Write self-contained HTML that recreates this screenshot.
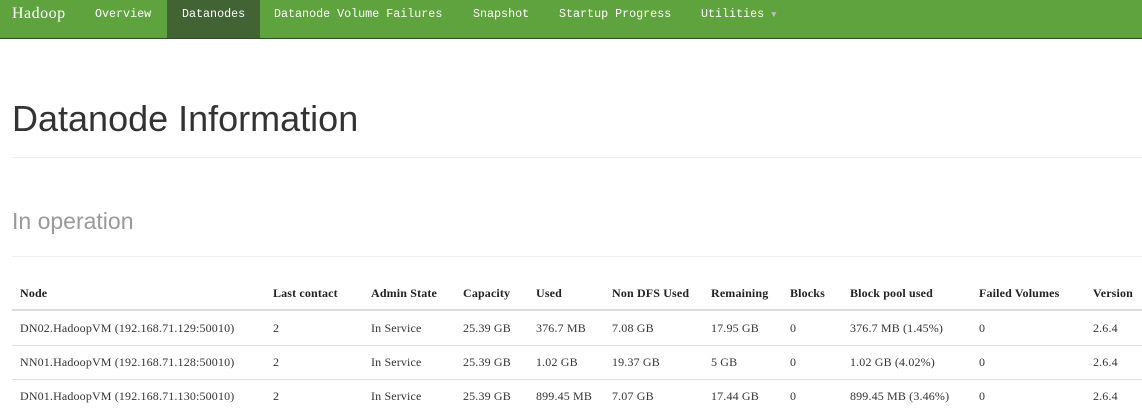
<!DOCTYPE html>
<html><head><meta charset="utf-8"><style>
body{margin:0;width:1142px;height:411px;overflow:hidden;background:#fff;font-family:"Liberation Serif","Noto Serif CJK SC",serif;color:#333}
.nav{position:absolute;left:0;top:0;width:1142px;height:38px;background:#5fa33e;border-bottom:1px solid #2d4e1e}
.nav span{position:absolute;top:0;height:38px;line-height:28px;color:#fff;font-size:11.7px;font-family:"Liberation Mono",monospace}
.nav .act{background:#426434}
h1{position:absolute;left:12px;top:98px;margin:0;font:36px "Liberation Sans",sans-serif;color:#333}
.hr1{position:absolute;left:12px;right:0;top:157px;border-top:1px solid #eee}
h2{position:absolute;left:12px;top:208px;margin:0;font:23px "Liberation Sans",sans-serif;color:#999}
.hr2{position:absolute;left:12px;right:0;top:256px;border-top:1px solid #eee}
.c{position:absolute;font-size:12px;white-space:nowrap;letter-spacing:0.15px}
.h{font-weight:bold;color:#222}
.l{position:absolute;left:12px;right:0}
</style></head><body>
<div class="nav">
<span style="left:12px;font-size:16px;font-family:'Liberation Serif',serif;letter-spacing:0.5px">Hadoop</span>
<span style="left:95px">Overview</span>
<span class="act" style="left:167px;width:93px"><span style="left:15px;position:absolute">Datanodes</span></span>
<span style="left:274px">Datanode Volume Failures</span>
<span style="left:473px">Snapshot</span>
<span style="left:559px">Startup Progress</span>
<span style="left:701px">Utilities <span style="position:relative;color:#bbb;font-size:9px">▼</span></span>
</div>
<h1>Datanode Information</h1>
<div class="hr1"></div>
<h2>In operation</h2>
<div class="hr2"></div>
<div class="l" style="top:309px;border-top:2px solid #ddd"></div>
<div class="l" style="top:345px;border-top:1px solid #ddd"></div>
<div class="l" style="top:379px;border-top:1px solid #ddd"></div>
<div id="t"></div>
<script>
var xs=[20,273,371,463,536,612,711,790,850,979,1093];
var rows=[[286,1,["Node","Last contact","Admin State","Capacity","Used","Non DFS Used","Remaining","Blocks","Block pool used","Failed Volumes","Version"]],
[321,0,["DN02.HadoopVM (192.168.71.129:50010)","2","In Service","25.39 GB","376.7 MB","7.08 GB","17.95 GB","0","376.7 MB (1.45%)","0","2.6.4"]],
[355,0,["NN01.HadoopVM (192.168.71.128:50010)","2","In Service","25.39 GB","1.02 GB","19.37 GB","5 GB","0","1.02 GB (4.02%)","0","2.6.4"]],
[389,0,["DN01.HadoopVM (192.168.71.130:50010)","2","In Service","25.39 GB","899.45 MB","7.07 GB","17.44 GB","0","899.45 MB (3.46%)","0","2.6.4"]]];
var h="";rows.forEach(function(r){r[2].forEach(function(t,i){h+='<div class="c'+(r[1]?' h':'')+'" style="left:'+xs[i]+'px;top:'+r[0]+'px">'+t+'</div>';});});
document.getElementById("t").innerHTML=h;
</script>
</body></html>
